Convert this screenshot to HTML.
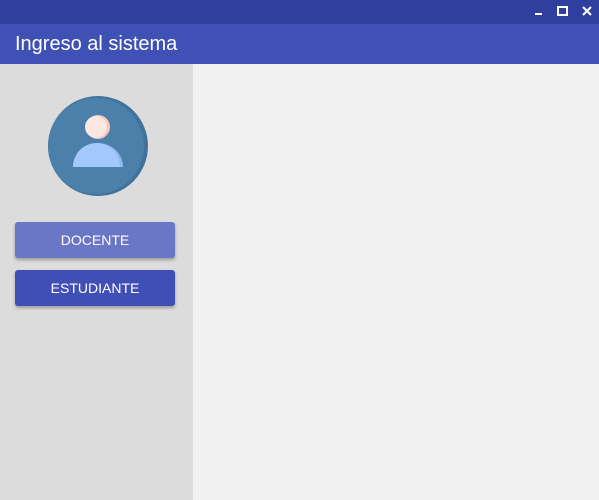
<!DOCTYPE html>
<html><head><meta charset="utf-8"><style>
*{margin:0;padding:0;box-sizing:border-box}
body{width:599px;height:500px;overflow:hidden;font-family:"Liberation Sans",sans-serif;background:#f1f1f1;position:relative}
#tb{position:absolute;left:0;top:0;width:599px;height:24px;background:#303f9f}
#hd{position:absolute;left:0;top:24px;width:599px;height:40px;background:#3f51b5;color:#fff;font-size:20px;line-height:40px;padding-left:15px}
#sb{position:absolute;left:0;top:64px;width:193px;height:436px;background:#dcdcdc}
.btn{position:absolute;left:15px;width:160px;height:36px;border-radius:3px;color:#fff;font-size:14px;font-weight:normal;text-align:center;line-height:36px;box-shadow:0 2px 3px rgba(0,0,0,.3)}
</style></head><body>
<div id="tb">
<svg width="599" height="24" style="position:absolute;left:0;top:0">
<rect x="535" y="13" width="7" height="2" fill="#fff"/>
<rect x="558" y="7" width="9" height="8" fill="none" stroke="#fff" stroke-width="2"/>
<path d="M583 7L591 15M591 7L583 15" stroke="#fff" stroke-width="2"/>
</svg>
</div>
<div id="hd">Ingreso al sistema</div>
<div id="sb"></div>
<svg width="193" height="140" style="position:absolute;left:0;top:90px">
<circle cx="98" cy="56" r="50" fill="#41739a"/>
<circle cx="96" cy="56" r="48" fill="#4a80aa"/>
<path d="M73 77A25 24 0 0 1 123 77Z" fill="#8fb9f0"/>
<path d="M73 77A23.5 24 0 0 1 120 77Z" fill="#a3c8fb"/>
<circle cx="98" cy="37" r="12" fill="#f8c6bb"/>
<circle cx="96" cy="37" r="11" fill="#fde7e1"/>
</svg>
<div class="btn" style="top:222px;background:#6a76c6">DOCENTE</div>
<div class="btn" style="top:270px;background:#3f4fb5">ESTUDIANTE</div>
</body></html>
